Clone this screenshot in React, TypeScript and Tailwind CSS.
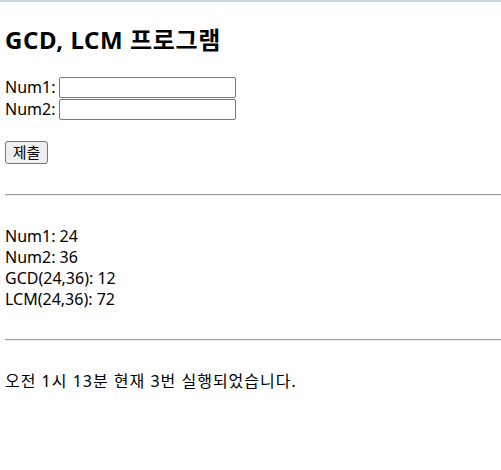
export default function App() {
  const font = {
    fontFamily: '"Noto Sans", "Noto Sans CJK KR", sans-serif',
  };
  return (
    <div className="w-[501px] h-[470px] bg-white text-black" style={font}>
      <div className="h-[2px] bg-[#c6d8df]" />
      <div className="pl-[5px]">
        <h2 className="mt-[22px] text-[24px] font-bold leading-[32px] tracking-[0.6px]">
          GCD, LCM 프로그램
        </h2>

        <form className="mt-[20px]" onSubmit={(e) => e.preventDefault()}>
          <div className="flex h-[22px] items-center text-[16px]">
            <label className="w-[54px]">Num1:</label>
            <input
              type="text"
              className="h-[21px] w-[177px] rounded-[2px] border border-[#767676] bg-white px-1"
            />
          </div>
          <div className="flex h-[22px] items-center text-[16px]">
            <label className="w-[54px]">Num2:</label>
            <input
              type="text"
              className="h-[21px] w-[177px] rounded-[2px] border border-[#767676] bg-white px-1"
            />
          </div>
          <button
            type="submit"
            className="mt-[21px] flex h-[23px] w-[43px] items-center justify-center rounded-[3px] border border-[#767676] bg-[#efefef] text-[15px]"
          >
            제출
          </button>
        </form>

        <div className="mt-[30px] border-t border-b border-t-[#9c9c9c] border-b-[#eeeeee]" />

        <div className="mt-[30px] text-[16px] leading-[21px]">
          <div>Num1: 24</div>
          <div>Num2: 36</div>
          <div>GCD(24,36): 12</div>
          <div>LCM(24,36): 72</div>
        </div>

        <div className="mt-[29px] border-t border-b border-t-[#9c9c9c] border-b-[#eeeeee]" />

        <p className="mt-[30px] text-[16px] leading-[21px] tracking-[1px]">
          오전 1시 13분 현재 3번 실행되었습니다.
        </p>
      </div>
    </div>
  );
}
